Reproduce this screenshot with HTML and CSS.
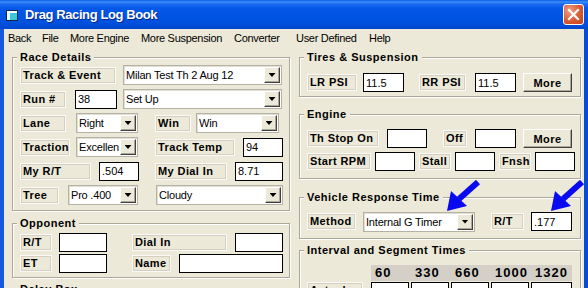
FILE: index.html
```html
<!DOCTYPE html>
<html lang="en">
<head>
  <meta charset="UTF-8">
  <meta name="viewport" content="width=device-width, initial-scale=1.0">
  <title>Drag Racing Log Book</title>
  <link rel="stylesheet" href="styles.css">
</head>
<body>
  <div class="window">
    <div class="titlebar">
      <svg class="app-icon" width="12" height="11" viewBox="0 0 12 11">
        <rect x="0.5" y="0.5" width="11" height="10" fill="#3cc8d8" stroke="#0b2a4a"/>
        <rect x="1" y="1" width="10" height="2" fill="#ffffff"/>
        <rect x="1" y="3" width="3" height="7" fill="#e8fbff"/>
      </svg>
      <span class="title">Drag Racing Log Book</span>
      <div class="close-btn">
        <svg width="21" height="21" viewBox="0 0 21 21">
          <path d="M6 6 L15 15 M15 6 L6 15" stroke="#fff" stroke-width="2.2" stroke-linecap="square"/>
        </svg>
      </div>
    </div>

    <div class="frame">
      <div class="menubar">
        <span class="m-back">Back</span>
        <span class="m-file">File</span>
        <span class="m-engine">More Engine</span>
        <span class="m-susp">More Suspension</span>
        <span class="m-conv">Converter</span>
        <span class="m-user">User Defined</span>
        <span>Help</span>
      </div>

      <div class="content">
        <!-- left column -->
        <div class="col col-left">
          <div class="group race">
            <div class="group-title">Race Details</div>
            <div class="rows">
              <div class="row">
                <div class="lbl w96">Track &amp; Event</div>
                <div class="combo w159 ml7"><span>Milan Test Th 2 Aug 12</span><i class="drop"></i></div>
              </div>
              <div class="row">
                <div class="lbl w46">Run #</div>
                <input class="txt w42 ml9" value="38" readonly>
                <div class="combo w159 ml6"><span>Set Up</span><i class="drop"></i></div>
              </div>
              <div class="row">
                <div class="lbl w46">Lane</div>
                <div class="combo w62 ml10"><span>Right</span><i class="drop"></i></div>
                <div class="lbl w36 ml17">Win</div>
                <div class="combo w83 ml5"><span>Win</span><i class="drop"></i></div>
              </div>
              <div class="row">
                <div class="lbl w50">Traction</div>
                <div class="combo w62 ml6"><span>Excellen</span><i class="drop"></i></div>
                <div class="lbl w80 ml17">Track Temp</div>
                <input class="txt w40 ml8" value="94" readonly>
              </div>
              <div class="row">
                <div class="lbl w71">My R/T</div>
                <input class="txt w40 ml8" value=".504" readonly>
                <div class="lbl w72 ml16">My Dial In</div>
                <input class="txt w48 ml8" value="8.71" readonly>
              </div>
              <div class="row">
                <div class="lbl w39">Tree</div>
                <div class="combo w70 ml9"><span>Pro .400</span><i class="drop"></i></div>
                <div class="combo w127 ml18"><span>Cloudy</span><i class="drop"></i></div>
              </div>
            </div>
          </div>

          <div class="group opponent">
            <div class="group-title">Opponent</div>
            <div class="rows">
              <div class="row">
                <div class="lbl w32">R/T</div>
                <input class="txt w48 ml7" readonly>
                <div class="lbl w95 ml25">Dial In</div>
                <input class="txt w48 ml8" readonly>
              </div>
              <div class="row">
                <div class="lbl w32">ET</div>
                <input class="txt w48 ml7" readonly>
                <div class="lbl w39 ml25">Name</div>
                <input class="txt w104 ml8" readonly>
              </div>
            </div>
          </div>

          <div class="group delay">
            <div class="group-title">Delay Box</div>
          </div>
        </div>

        <!-- right column -->
        <div class="col col-right">
          <div class="group tires">
            <div class="group-title">Tires &amp; Suspension</div>
            <div class="rows">
              <div class="row">
                <div class="lbl w50">LR PSI</div>
                <input class="txt w41 ml6" value="11.5" readonly>
                <div class="lbl w47 ml15">RR PSI</div>
                <input class="txt w41 ml9" value="11.5" readonly>
                <button class="btn w49 ml7">More</button>
              </div>
            </div>
          </div>

          <div class="group engine">
            <div class="group-title">Engine</div>
            <div class="rows">
              <div class="row">
                <div class="lbl w72">Th Stop On</div>
                <input class="txt w40 ml8" readonly>
                <div class="lbl w24 ml16">Off</div>
                <input class="txt w41 ml8" readonly>
                <button class="btn w49 ml7">More</button>
              </div>
              <div class="row">
                <div class="lbl w64">Start RPM</div>
                <input class="txt w40 ml4" readonly>
                <div class="lbl w32 ml4">Stall</div>
                <input class="txt w40 ml4" readonly>
                <div class="lbl w32 ml4">Fnsh</div>
                <input class="txt w40 ml4" readonly>
              </div>
            </div>
          </div>

          <div class="group vehicle">
            <div class="group-title">Vehicle Response Time</div>
            <div class="rows">
              <div class="row">
                <div class="lbl w49">Method</div>
                <div class="combo w112 ml7"><span>Internal G Timer</span><i class="drop"></i></div>
                <div class="lbl w33 ml16">R/T</div>
                <input class="txt w41 ml7" value=".177" readonly>
              </div>
            </div>
          </div>

          <div class="group interval">
            <div class="group-title">Interval and Segment Times</div>
            <div class="iv-head">
              <span>60</span><span>330</span><span>660</span><span>1000</span><span>1320</span>
            </div>
            <div class="row iv-row">
              <div class="lbl w56">Actual</div>
              <input class="txt w38 ml8" value="1.33" readonly>
              <input class="txt w38 ml2" readonly>
              <input class="txt w38 ml2" readonly>
              <input class="txt w38 ml2" readonly>
              <input class="txt w41 ml2" value="8.67" readonly>
            </div>
          </div>
        </div>
      </div>
    </div>

    <!-- pointer arrows drawn over the form -->
    <svg class="pointer pointer-method" width="34" height="32" viewBox="0 0 34 32">
      <line x1="32" y1="2" x2="13" y2="19" stroke="#0a0af0" stroke-width="6"/>
      <polygon points="1,31 5,11 21,26" fill="#0a0af0"/>
    </svg>
    <svg class="pointer pointer-rt" width="34" height="32" viewBox="0 0 34 32">
      <line x1="32" y1="2" x2="13" y2="19" stroke="#0a0af0" stroke-width="6"/>
      <polygon points="1,31 5,11 21,26" fill="#0a0af0"/>
    </svg>
  </div>
</body>
</html>
```

FILE: styles.css
```css
* {
  box-sizing: border-box;
}
body {
  margin: 0;
  width: 588px;
  height: 288px;
  overflow: hidden;
  background: #ece9d8;
  font-family: "Liberation Sans", Arial, sans-serif;
  font-size: 11px;
  color: #000;
}
.window {
  position: relative;
  height: 288px;
  display: flex;
  flex-direction: column;
}

/* title bar */
.titlebar {
  flex: none;
  height: 29px;
  display: flex;
  align-items: center;
  padding: 0 4px 0 6px;
  background: linear-gradient(#0a5de6 0, #3d8ef8 2px, #1c6af0 4px, #0659e8 8px, #0054e3 16px, #0050dd 23px, #0046cf 29px);
  color: #fff;
}
.app-icon {
  margin-top: 2px;
}
.title {
  margin-left: 7px;
  font-size: 13px;
  font-weight: bold;
  letter-spacing: -0.4px;
  text-shadow: 1px 1px 0 #0a2a8a;
}
.close-btn {
  margin-left: auto;
  width: 21px;
  height: 21px;
  border: 1px solid #fff;
  border-radius: 3px;
  background: radial-gradient(circle at 30% 30%, #ee9f82, #d95a32 55%, #c2401b);
}
.close-btn svg {
  display: block;
  margin: -1px;
}

/* window body */
.frame {
  flex: 1;
  border-left: 4px solid #1558de;
  border-right: 4px solid #0a4bd6;
  background: #ece9d8;
  overflow: hidden;
}
.menubar {
  height: 18px;
  display: flex;
  align-items: center;
  padding-left: 4px;
  letter-spacing: -0.3px;
  white-space: nowrap;
}
.m-back { width: 34px; }
.m-file { width: 28px; }
.m-engine { width: 71px; }
.m-susp { width: 93px; }
.m-conv { width: 62px; }
.m-user { width: 73px; }

.content {
  display: flex;
  padding: 10px 0 0 8px;
}
.col-left {
  width: 278px;
}
.col-right {
  width: 282px;
  margin-left: 9px;
}

/* group boxes */
.group {
  border: 1px solid #aca899;
  box-shadow: inset 1px 1px 0 #fff, 1px 1px 0 #fff;
  padding: 0 4px 0 7px;
}
.group-title {
  width: max-content;
  height: 13px;
  line-height: 13px;
  margin: -7px 0 0 -3px;
  padding: 0 3px;
  background: #ece9d8;
  font-weight: bold;
  letter-spacing: 0.5px;
}
.rows {
  display: flex;
  flex-direction: column;
}
.row {
  display: flex;
  align-items: center;
  height: 19px;
}

.race .rows { gap: 4px; padding-top: 1px; }
.race .row { height: 20px; }
.race { padding-bottom: 5px; }

.opponent { margin-top: 12px; padding-bottom: 4px; }
.opponent .rows { gap: 2px; padding-top: 3px; }

.delay { margin-top: 11px; height: 30px; }

.tires { padding-bottom: 4px; }
.tires .rows { padding-top: 9px; }

.engine { margin-top: 17px; padding-bottom: 7px; }
.engine .rows { gap: 4px; padding-top: 8px; }

.vehicle { margin-top: 18px; padding-bottom: 7px; }
.vehicle .rows { padding-top: 8px; }

.interval { margin-top: 11px; height: 60px; }

/* controls */
.lbl {
  height: 17px;
  line-height: 15px;
  padding-left: 2px;
  border: 1px solid #fbfaf6;
  box-shadow: inset 0 0 0 1px #d3d0c1;
  font-weight: bold;
  letter-spacing: 0.4px;
  white-space: nowrap;
  overflow: hidden;
}
.txt {
  height: 19px;
  margin: 0;
  padding: 0 2px;
  border: 1px solid #000;
  background: #fff;
  font: 11px "Liberation Sans", Arial, sans-serif;
  color: #000;
  outline: none;
}
.combo {
  height: 20px;
  display: flex;
  align-items: center;
  background: #fff;
  border: 1px solid #b5b2a3;
  box-shadow: inset 1px 1px 0 #e2e0d6;
  padding: 1px 1px 1px 2px;
}
.combo span {
  flex: 1;
  white-space: nowrap;
  overflow: hidden;
  letter-spacing: -0.2px;
}
.drop {
  flex: none;
  width: 16px;
  height: 16px;
  display: flex;
  align-items: center;
  justify-content: center;
  background: #ece9d8;
  border: 1px solid;
  border-color: #fff #404040 #404040 #fff;
  box-shadow: inset -1px -1px 0 #aca899;
}
.drop::after {
  content: "";
  width: 7px;
  height: 4px;
  background: #000;
  clip-path: polygon(0 0, 100% 0, 50% 100%);
}
.btn {
  height: 19px;
  padding: 0;
  background: #ece9d8;
  border: 1px solid;
  border-color: #fff #404040 #404040 #fff;
  box-shadow: inset -1px -1px 0 #aca899;
  font: bold 11px "Liberation Sans", Arial, sans-serif;
  letter-spacing: 0.4px;
  color: #000;
}

/* interval table */
.iv-head {
  display: flex;
  width: 201px;
  height: 16px;
  margin: 8px 0 0 64px;
  background: #d4d0c8;
  font-size: 13px;
  font-weight: bold;
  letter-spacing: 1px;
  line-height: 16px;
}
.iv-head span {
  width: 40px;
  padding-left: 4px;
}
.iv-row {
  margin-top: 1px;
  align-items: flex-start;
}

/* arrows over the form */
.pointer {
  position: absolute;
  top: 180px;
}
.pointer-method { left: 446px; }
.pointer-rt { left: 550px; }

/* widths and gaps */
.w24 { width: 24px; }
.w32 { width: 32px; }
.w33 { width: 33px; }
.w36 { width: 36px; }
.w38 { width: 38px; }
.w39 { width: 39px; }
.w40 { width: 40px; }
.w41 { width: 41px; }
.w42 { width: 42px; }
.w46 { width: 46px; }
.w47 { width: 47px; }
.w48 { width: 48px; }
.w49 { width: 49px; }
.w50 { width: 50px; }
.w56 { width: 56px; }
.w62 { width: 62px; }
.w64 { width: 64px; }
.w70 { width: 70px; }
.w71 { width: 71px; }
.w72 { width: 72px; }
.w80 { width: 80px; }
.w83 { width: 83px; }
.w95 { width: 95px; }
.w96 { width: 96px; }
.w104 { width: 104px; }
.w112 { width: 112px; }
.w127 { width: 127px; }
.w159 { width: 159px; }
.ml2 { margin-left: 2px; }
.ml4 { margin-left: 4px; }
.ml5 { margin-left: 5px; }
.ml6 { margin-left: 6px; }
.ml7 { margin-left: 7px; }
.ml8 { margin-left: 8px; }
.ml9 { margin-left: 9px; }
.ml10 { margin-left: 10px; }
.ml15 { margin-left: 15px; }
.ml16 { margin-left: 16px; }
.ml17 { margin-left: 17px; }
.ml18 { margin-left: 18px; }
.ml25 { margin-left: 25px; }
```
